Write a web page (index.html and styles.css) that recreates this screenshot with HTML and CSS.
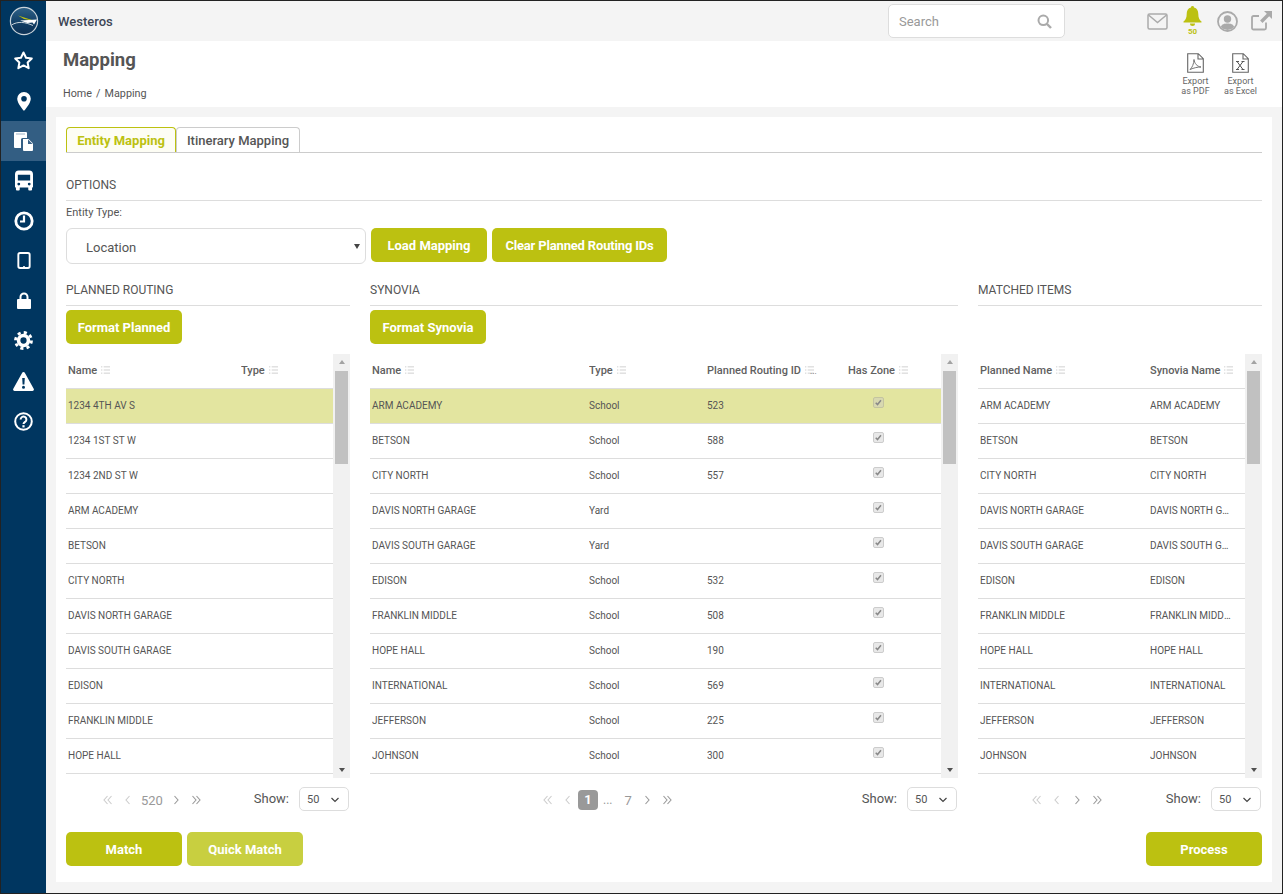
FILE: index.html
```html
<!DOCTYPE html>
<html lang="en">
<head>
<meta charset="utf-8">
<title>Mapping</title>
<link rel="stylesheet" href="styles.css">
</head>
<body>
<svg class="defs" width="0" height="0" aria-hidden="true">
  <symbol id="sort" viewBox="0 0 10 8"><path d="M0 .5h1.500M3 .5h7M0 4h1.500M3 4h7M0 7.500h1.500M3 7.500h7" fill="none" stroke="currentColor" stroke-width="1"/></symbol>
  <symbol id="chk" viewBox="0 0 12 12"><path d="M2.300 6.200l2.400 2.500 4.600-5.600" fill="none" stroke="currentColor" stroke-width="2"/></symbol>
  <symbol id="chl" viewBox="0 0 8 10"><path d="M5.500 1L2 5l3.500 4" fill="none" stroke="currentColor" stroke-width="1.100"/></symbol>
  <symbol id="chr" viewBox="0 0 8 10"><path d="M2.500 1L6 5 2.500 9" fill="none" stroke="currentColor" stroke-width="1.100"/></symbol>
  <symbol id="dbl" viewBox="0 0 10 10"><path d="M4.500 1L1 5l3.500 4M8.500 1L5 5l3.500 4" fill="none" stroke="currentColor" stroke-width="1.100"/></symbol>
  <symbol id="dbr" viewBox="0 0 10 10"><path d="M1.500 1L5 5 1.500 9M5.500 1L9 5 5.500 9" fill="none" stroke="currentColor" stroke-width="1.100"/></symbol>
  <symbol id="down" viewBox="0 0 10 6"><path d="M1.500 1L5 4.500 8.500 1" fill="none" stroke="currentColor" stroke-width="1.200"/></symbol>
</svg>
<div class="app">
  <nav class="side">
    <div class="nav-item logo">
      <svg width="30" height="30" viewBox="0 0 30 30"><defs><linearGradient id="lg" x1="0" y1="0" x2="0" y2="1"><stop offset="0" stop-color="#2f6288"/><stop offset=".55" stop-color="#123f66"/><stop offset="1" stop-color="#0c3054"/></linearGradient></defs><circle cx="15" cy="15" r="13.600" fill="url(#lg)" stroke="#c9d3da" stroke-width="1.200"/><path d="M2.500 19C9 15 16 16 24 19.500" fill="none" stroke="#c9d3da" stroke-width="1"/><path d="M9 9.500L26 15 15 13z" fill="#bcc111"/><path d="M11 14.500l17-1-3 5-1.500-2-5 .5z" fill="#fff"/></svg>
    </div>
    <a class="nav-item"><svg class="up1" width="21" height="21" viewBox="0 0 24 24"><path d="M12 2.800l2.900 6 6.600.9-4.800 4.600 1.200 6.500-5.900-3.200-5.900 3.200 1.200-6.500-4.800-4.600 6.600-.9z" fill="none" stroke="#fff" stroke-width="2.300" stroke-linejoin="round"/></svg></a>
    <a class="nav-item"><svg width="14" height="19" viewBox="0 0 14 19"><path fill="#fff" fill-rule="evenodd" d="M7 0a6.800 6.800 0 0 0-6.800 6.800C.2 11.500 7 19 7 19s6.800-7.500 6.800-12.200A6.800 6.800 0 0 0 7 0zm0 9.600a2.800 2.800 0 1 1 0-5.600 2.800 2.800 0 0 1 0 5.600z"/></svg></a>
    <a class="nav-item active"><svg width="21" height="21" viewBox="0 0 21 21"><path fill="#fff" d="M1 2a1 1 0 0 1 1-1h11a1 1 0 0 1 1 1v5H9.500A1.500 1.500 0 0 0 8 8.500V17H2a1 1 0 0 1-1-1z"/><path fill="#fff" d="M10 8h5.500l4.500 4.500V19a1 1 0 0 1-1 1h-8a1 1 0 0 1-1-1z"/><path fill="#3a6288" d="M15 8.500v4.500h4.500z"/><path stroke="#9fb3c6" d="M3 3h9" fill="none"/></svg></a>
    <a class="nav-item"><svg class="up1" width="18" height="21" viewBox="0 0 19 21"><path fill="#fff" fill-rule="evenodd" d="M4 0h11a4 4 0 0 1 4 4v13a1 1 0 0 1-1 1v2a1 1 0 0 1-1 1h-2a1 1 0 0 1-1-1v-2H5v2a1 1 0 0 1-1 1H2a1 1 0 0 1-1-1v-2a1 1 0 0 1-1-1V4a4 4 0 0 1 4-4zM3 4.500V10.500h13V4.500zM4 12.800a1.500 1.500 0 1 0 0 3 1.500 1.500 0 0 0 0-3zm11 0a1.500 1.500 0 1 0 0 3 1.500 1.500 0 0 0 0-3z"/></svg></a>
    <a class="nav-item"><svg width="20" height="20" viewBox="0 0 20 20"><circle cx="10" cy="10" r="8.200" fill="none" stroke="#fff" stroke-width="2.800"/><path d="M10 4.500V10.500H6" fill="none" stroke="#fff" stroke-width="2.200"/></svg></a>
    <a class="nav-item"><svg class="up1" width="14" height="17" viewBox="0 0 14 18"><rect x="1" y="1" width="12" height="16" rx="1.800" fill="none" stroke="#fff" stroke-width="2"/><rect x="6" y="15" width="2" height="1" fill="#fff"/></svg></a>
    <a class="nav-item"><svg class="up1" width="14" height="17" viewBox="0 0 14 17"><path d="M3.500 8V5a3.500 3.500 0 0 1 7 0v3" fill="none" stroke="#fff" stroke-width="2"/><rect y="7" width="14" height="10" rx="1" fill="#fff"/></svg></a>
    <a class="nav-item"><svg class="up1" width="19" height="19" viewBox="0 0 20 20"><circle cx="10" cy="10" r="8.400" fill="none" stroke="#fff" stroke-width="3" stroke-dasharray="3.300 3.300"/><circle cx="10" cy="10" r="5.200" fill="none" stroke="#fff" stroke-width="3.800"/></svg></a>
    <a class="nav-item"><svg width="21" height="19" viewBox="0 0 21 19"><path fill="#fff" fill-rule="evenodd" d="M10.500 0a1.500 1.500 0 0 1 1.300.8l8.900 16a1.500 1.500 0 0 1-1.300 2.200H1.600a1.500 1.500 0 0 1-1.300-2.200l8.900-16A1.500 1.500 0 0 1 10.500 0zM9.200 6l.4 6.500h1.800l.4-6.500zm1.300 7.800a1.500 1.500 0 1 0 0 3 1.500 1.500 0 0 0 0-3z"/></svg></a>
    <a class="nav-item"><svg width="19" height="19" viewBox="0 0 19 19"><circle cx="9.500" cy="9.500" r="8.300" fill="none" stroke="#fff" stroke-width="2"/><path d="M6.600 7.500a2.900 2.900 0 1 1 4.500 2.400c-1 .7-1.600 1.100-1.600 2.200" fill="none" stroke="#fff" stroke-width="2"/><rect x="8.400" y="13.200" width="2.200" height="2.200" fill="#fff"/></svg></a>
  </nav>
  <div class="main">
    <header class="topbar">
      <span class="org">Westeros</span>
      <div class="search">
        <span>Search</span>
        <svg width="15" height="15" viewBox="0 0 15 15"><circle cx="6.300" cy="6.300" r="4.800" fill="none" stroke="#aaa" stroke-width="2"/><path d="M10 10l4 4" stroke="#aaa" stroke-width="2.400"/></svg>
      </div>
      <div class="top-icons">
        <svg width="21" height="17" viewBox="0 0 21 17"><rect x="1" y="1" width="19" height="15" rx="1.500" fill="none" stroke="#aaa" stroke-width="1.500"/><path d="M1.500 2l9 7.500 9-7.500" fill="none" stroke="#aaa" stroke-width="1.500"/></svg>
        <div class="bell">
          <svg width="19" height="20" viewBox="0 0 19 20"><path fill="#bcc111" d="M9.500 0a1.500 1.500 0 0 1 1.500 1.600c3 .7 4.300 3.200 4.300 6.400 0 4 1 5.700 3.200 7.500v1H.5v-1C2.700 13.700 3.700 12 3.700 8c0-3.200 1.300-5.700 4.300-6.400A1.500 1.500 0 0 1 9.500 0z"/><path fill="#bcc111" d="M7 17.500h5a2.500 2.500 0 0 1-5 0z"/></svg>
          <span>50</span>
        </div>
        <svg width="21" height="21" viewBox="0 0 21 21"><circle cx="10.500" cy="10.500" r="9.500" fill="none" stroke="#aaa" stroke-width="1.800"/><circle cx="10.500" cy="8" r="3.700" fill="#aaa"/><path fill="#aaa" d="M3.800 16c1-3 3.500-3.500 6.700-3.500s5.700.5 6.700 3.500a9 9 0 0 1-13.400 0z"/></svg>
        <svg width="21" height="20" viewBox="0 0 21 20"><path d="M15 11.500V17a1.500 1.500 0 0 1-1.500 1.500H2.500A1.500 1.500 0 0 1 1 17V6.500A1.500 1.500 0 0 1 2.500 5H8" fill="none" stroke="#aaa" stroke-width="1.800"/><path fill="#aaa" d="M13 0h8v8l-2.800-2.800-6.700 6.700-2.400-2.400 6.700-6.700z"/></svg>
      </div>
    </header>
    <section class="page-head">
      <div>
        <h1>Mapping</h1>
        <div class="crumbs"><span>Home</span><span>/</span><span>Mapping</span></div>
      </div>
      <div class="exports">
        <div class="export">
          <svg width="17" height="20" viewBox="0 0 17 20"><path d="M.7.700h10.600l5 5V19.300H.7zM11 .7v5.300h5.300" fill="none" stroke="#666" stroke-width="1.100"/><path d="M3 16.500c2-1.500 4-6 4-10 .5 4 3 7 7 7.500-3.500 0-7 .8-11 2.500z" fill="none" stroke="#666" stroke-width=".9"/></svg>
          <span>Export<br>as PDF</span>
        </div>
        <div class="export">
          <svg width="17" height="20" viewBox="0 0 17 20"><path d="M.7.700h10.600l5 5V19.300H.7zM11 .7v5.300h5.300" fill="none" stroke="#666" stroke-width="1.100"/><path d="M5 8.500l6 8M11 8.500l-6 8M4 8.500h3M9.500 8.500h3M4 16.500h3M9.500 16.500h3" fill="none" stroke="#555" stroke-width="1"/></svg>
          <span>Export<br>as Excel</span>
        </div>
      </div>
    </section>
    <main class="content">
      <div class="card">
        <div class="tabs">
          <div class="tab on">Entity Mapping</div>
          <div class="tab">Itinerary Mapping</div>
        </div>
        <h2 class="sec sec-opt">OPTIONS</h2>
        <div class="entity-label">Entity Type:</div>
        <div class="opt-row">
          <div class="select-lg">Location<i class="caret"></i></div>
          <button class="btn w116">Load Mapping</button>
          <button class="btn clear">Clear Planned Routing IDs</button>
        </div>
        <div class="cols">
          <section class="col">
            <h2 class="sec">PLANNED ROUTING</h2>
            <div class="tools"><button class="btn w116">Format Planned</button></div>
            <div class="grid-wrap">
              <div class="list planned">
                <div class="row head"><div>Name<svg class="sort"><use href="#sort"/></svg></div><div>Type<svg class="sort"><use href="#sort"/></svg></div></div>
                <div class="row sel"><div>1234 4TH AV S</div><div></div></div>
                <div class="row"><div>1234 1ST ST W</div><div></div></div>
                <div class="row"><div>1234 2ND ST W</div><div></div></div>
                <div class="row"><div>ARM ACADEMY</div><div></div></div>
                <div class="row"><div>BETSON</div><div></div></div>
                <div class="row"><div>CITY NORTH</div><div></div></div>
                <div class="row"><div>DAVIS NORTH GARAGE</div><div></div></div>
                <div class="row"><div>DAVIS SOUTH GARAGE</div><div></div></div>
                <div class="row"><div>EDISON</div><div></div></div>
                <div class="row"><div>FRANKLIN MIDDLE</div><div></div></div>
                <div class="row"><div>HOPE HALL</div><div></div></div>
              </div>
              <div class="sb"><i class="up"></i><b></b><i class="dn"></i></div>
            </div>
            <div class="pager-row">
              <div class="pager p1">
                <svg class="pg off"><use href="#dbl"/></svg><svg class="pg off"><use href="#chl"/></svg>
                <span class="num">520</span>
                <svg class="pg"><use href="#chr"/></svg><svg class="pg"><use href="#dbr"/></svg>
              </div>
              <div class="show"><span>Show:</span><div class="select-sm">50<svg class="dd"><use href="#down"/></svg></div></div>
            </div>
          </section>
          <section class="col">
            <h2 class="sec">SYNOVIA</h2>
            <div class="tools"><button class="btn w116">Format Synovia</button></div>
            <div class="grid-wrap">
              <div class="list synovia">
                <div class="row head"><div>Name<svg class="sort"><use href="#sort"/></svg></div><div>Type<svg class="sort"><use href="#sort"/></svg></div><div>Planned Routing ID<svg class="sort"><use href="#sort"/></svg><span class="dots">...</span></div><div>Has Zone<svg class="sort"><use href="#sort"/></svg></div></div>
                <div class="row sel"><div>ARM ACADEMY</div><div>School</div><div>523</div><div class="zone"><svg class="chk"><use href="#chk"/></svg></div></div>
                <div class="row"><div>BETSON</div><div>School</div><div>588</div><div class="zone"><svg class="chk"><use href="#chk"/></svg></div></div>
                <div class="row"><div>CITY NORTH</div><div>School</div><div>557</div><div class="zone"><svg class="chk"><use href="#chk"/></svg></div></div>
                <div class="row"><div>DAVIS NORTH GARAGE</div><div>Yard</div><div></div><div class="zone"><svg class="chk"><use href="#chk"/></svg></div></div>
                <div class="row"><div>DAVIS SOUTH GARAGE</div><div>Yard</div><div></div><div class="zone"><svg class="chk"><use href="#chk"/></svg></div></div>
                <div class="row"><div>EDISON</div><div>School</div><div>532</div><div class="zone"><svg class="chk"><use href="#chk"/></svg></div></div>
                <div class="row"><div>FRANKLIN MIDDLE</div><div>School</div><div>508</div><div class="zone"><svg class="chk"><use href="#chk"/></svg></div></div>
                <div class="row"><div>HOPE HALL</div><div>School</div><div>190</div><div class="zone"><svg class="chk"><use href="#chk"/></svg></div></div>
                <div class="row"><div>INTERNATIONAL</div><div>School</div><div>569</div><div class="zone"><svg class="chk"><use href="#chk"/></svg></div></div>
                <div class="row"><div>JEFFERSON</div><div>School</div><div>225</div><div class="zone"><svg class="chk"><use href="#chk"/></svg></div></div>
                <div class="row"><div>JOHNSON</div><div>School</div><div>300</div><div class="zone"><svg class="chk"><use href="#chk"/></svg></div></div>
              </div>
              <div class="sb"><i class="up"></i><b></b><i class="dn"></i></div>
            </div>
            <div class="pager-row">
              <div class="pager p2">
                <svg class="pg off"><use href="#dbl"/></svg><svg class="pg off"><use href="#chl"/></svg>
                <span class="cur">1</span><span class="ell">...</span><span class="num">7</span>
                <svg class="pg"><use href="#chr"/></svg><svg class="pg"><use href="#dbr"/></svg>
              </div>
              <div class="show"><span>Show:</span><div class="select-sm">50<svg class="dd"><use href="#down"/></svg></div></div>
            </div>
          </section>
          <section class="col">
            <h2 class="sec">MATCHED ITEMS</h2>
            <div class="tools"></div>
            <div class="grid-wrap">
              <div class="list matched">
                <div class="row head"><div>Planned Name<svg class="sort"><use href="#sort"/></svg></div><div>Synovia Name<svg class="sort"><use href="#sort"/></svg></div></div>
                <div class="row"><div>ARM ACADEMY</div><div>ARM ACADEMY</div></div>
                <div class="row"><div>BETSON</div><div>BETSON</div></div>
                <div class="row"><div>CITY NORTH</div><div>CITY NORTH</div></div>
                <div class="row"><div>DAVIS NORTH GARAGE</div><div>DAVIS NORTH GARAGE</div></div>
                <div class="row"><div>DAVIS SOUTH GARAGE</div><div>DAVIS SOUTH GARAGE</div></div>
                <div class="row"><div>EDISON</div><div>EDISON</div></div>
                <div class="row"><div>FRANKLIN MIDDLE</div><div>FRANKLIN MIDDLE</div></div>
                <div class="row"><div>HOPE HALL</div><div>HOPE HALL</div></div>
                <div class="row"><div>INTERNATIONAL</div><div>INTERNATIONAL</div></div>
                <div class="row"><div>JEFFERSON</div><div>JEFFERSON</div></div>
                <div class="row"><div>JOHNSON</div><div>JOHNSON</div></div>
              </div>
              <div class="sb"><i class="up"></i><b></b><i class="dn"></i></div>
            </div>
            <div class="pager-row">
              <div class="pager p3">
                <svg class="pg off"><use href="#dbl"/></svg><svg class="pg off"><use href="#chl"/></svg>
                <svg class="pg"><use href="#chr"/></svg><svg class="pg"><use href="#dbr"/></svg>
              </div>
              <div class="show"><span>Show:</span><div class="select-sm">50<svg class="dd"><use href="#down"/></svg></div></div>
            </div>
          </section>
        </div>
        <div class="actions">
          <div class="act-left">
            <button class="btn w116">Match</button>
            <button class="btn w116 light">Quick Match</button>
          </div>
          <button class="btn w116">Process</button>
        </div>
      </div>
    </main>
  </div>
</div>
</body>
</html>
```
FILE: styles.css
```css
* { box-sizing: border-box; }
html, body { margin: 0; padding: 0; }
body { font-family: Roboto, "Liberation Sans", sans-serif; color: #555; background: #fff; }
.defs { position: absolute; }
.app { display: flex; width: 1283px; height: 894px; border: 1px solid #222; overflow: hidden; }

/* sidebar */
.side { width: 45px; flex: none; background: #003660; display: flex; flex-direction: column; }
.nav-item { height: 40px; display: flex; align-items: center; justify-content: center; flex: none; }
.nav-item.active { background: #335e83; }
.up1 { margin-top: -2px; }

/* main column */
.main { flex: 1; min-width: 0; display: flex; flex-direction: column; background: #f4f4f4; }
.topbar { height: 40px; flex: none; display: flex; align-items: center; padding: 0 10px 0 12px; background: #f4f4f4; }
.org { font-size: 13px; font-weight: 500; color: #3d4656; }
.search { margin-left: auto; width: 177px; height: 34px; background: #fff; border: 1px solid #ddd; border-radius: 5px; display: flex; align-items: center; justify-content: space-between; padding: 0 12px 0 10px; font-size: 13px; color: #999; }
.top-icons { display: flex; align-items: center; margin-left: 82px; gap: 13px; height: 40px; }
.bell { width: 21px; height: 40px; display: flex; flex-direction: column; align-items: center; padding-top: 5px; margin: 0 1px; }
.bell span { font-size: 8px; font-weight: 700; line-height: 9px; margin-top: 1px; color: #bcc111; }

.page-head { height: 66px; flex: none; background: #fff; display: flex; justify-content: space-between; padding: 7px 25px 0 17px; }
h1 { margin: 0; font-size: 18.5px; line-height: 24px; font-weight: 700; color: #555; }
.crumbs { display: flex; gap: 4px; font-size: 10.8px; line-height: 14px; margin-top: 15px; color: #555; }
.exports { display: flex; gap: 12px; padding-top: 5px; }
.export { width: 33px; display: flex; flex-direction: column; align-items: center; font-size: 9px; line-height: 10px; text-align: center; color: #666; }
.export svg { margin-bottom: 3px; }
.export span { white-space: nowrap; }

/* card */
.content { flex: 1; padding: 10px 10px 11px; min-height: 0; }
.card { background: #fff; height: 100%; padding: 10px 10px 0; display: flex; flex-direction: column; }
.tabs { display: flex; height: 26px; border-bottom: 1px solid #ccc; flex: none; }
.tab { height: 25px; width: 124px; border: 1px solid #ccc; border-bottom: 0; border-radius: 4px 4px 0 0; font-size: 13px; font-weight: 500; line-height: 25px; text-align: center; color: #555; }
.tab.on { width: 110px; border-color: #bcc111; background: #fdfdf4; color: #bcc111; font-weight: 700; }

.sec { margin: 0; font-size: 12px; font-weight: 400; line-height: 16px; color: #555; height: 26px; padding-top: 2px; border-bottom: 1px solid #ddd; flex: none; }
.sec-opt { margin-top: 22px; }
.entity-label { font-size: 11px; line-height: 12px; margin-top: 6px; color: #555; }
.opt-row { display: flex; align-items: flex-start; gap: 5px; margin-top: 9px; }
.select-lg { width: 300px; height: 36px; border: 1px solid #ddd; border-radius: 6px; padding-left: 19px; font-size: 13px; line-height: 37px; color: #555; position: relative; }
.caret { position: absolute; right: 5px; top: 15px; border: 3.5px solid transparent; border-top: 5px solid #444; border-bottom: 0; }
.btn { height: 34px; border: 0; border-radius: 5px; background: #bcc111; color: #fff; font: 700 13px/16px Roboto, sans-serif; padding: 2px 13px 0; white-space: nowrap; }
.btn.w116 { width: 116px; padding: 2px 0 0; }
.btn.clear { width: 175px; padding: 2px 0 0; letter-spacing: -.17px; }
.btn.light { background: #c8cf40; }

.cols { display: grid; grid-template-columns: 284px 588px 284px; gap: 20px; margin-top: 16px; }
.col { min-width: 0; }
.tools { height: 34px; margin: 4px 0 10px; }

.grid-wrap { display: flex; height: 424px; }
.list { flex: 1; min-width: 0; overflow: hidden; }
.row { display: grid; height: 35px; align-items: center; font-size: 10px; color: #555; border-bottom: 1px solid #ddd; padding: 0 0 2px 2px; }
.row > div { min-width: 0; white-space: nowrap; overflow: hidden; text-overflow: ellipsis; }
.row.head { font-size: 11px; font-weight: 500; color: #606060; }
.row.sel { background: #e3e5a0; }
.planned .row { grid-template-columns: 173px 1fr; }
.synovia .row { grid-template-columns: 217px 118px 141px 1fr; }
.matched .row { grid-template-columns: 170px 84px; }
.sort { width: 9px; height: 8px; margin-left: 4px; color: #ccc; }
.dots { font-size: 8px; color: #777; line-height: 8px; margin-left: -4px; }
.zone { height: 32px; padding: 8px 0 0 25px; }
.chk { display: block; width: 11px; height: 11px; background: #e8e8e8; border: 1px solid #ccc; border-radius: 2px; color: #888; }
.sel .chk { background: #d8d8b0; border-color: #c4c4a0; }

.sb { width: 17px; flex: none; background: #f1f1f1; display: flex; flex-direction: column; align-items: center; }
.sb b { display: block; width: 13px; height: 93px; background: #c1c1c1; }
.sb .up, .sb .dn { display: block; width: 0; height: 0; border: 3.5px solid transparent; }
.sb .up { border-bottom: 4px solid #a3a3a3; border-top: 0; margin: 6px 0 7px; }
.sb .dn { border-top: 4px solid #505050; border-bottom: 0; margin-top: auto; margin-bottom: 6px; }

.pager-row { display: flex; align-items: center; justify-content: space-between; height: 24px; margin-top: 9px; }
.pager { display: flex; align-items: center; height: 20px; color: #999; font-size: 13px; margin-top: 2px; }
.pager.p1 { margin-left: 37px; gap: 10px; }
.pager.p2 { margin-left: 173px; gap: 6px; }
.pager.p3 { margin-left: 54px; gap: 10px; }
.pg { width: 10px; height: 10px; color: #999; }
.pg.off { color: #ccc; }
.pager.p2 .pg.off + .pg.off { margin-left: 4px; }
.pager.p2 .pg:last-child { margin-left: 4px; }
.num { color: #999; margin: 0 -2px; }
.p2 .num { margin: 0; padding: 0 4px 0 6px; }
.cur { width: 20px; height: 20px; line-height: 20px; border-radius: 4px; background: #999; color: #fff; font-weight: 700; text-align: center; margin-left: -1px; }
.ell { font-size: 12px; color: #999; margin-left: -1px; }
.show { display: flex; align-items: center; gap: 10px; font-size: 13px; color: #555; margin-right: 1px; }
.show > span { margin-top: -2px; }
.select-sm { width: 50px; height: 24px; border: 1px solid #ddd; border-radius: 5px; font-size: 11px; line-height: 23px; padding-left: 7px; position: relative; color: #555; }
.dd { position: absolute; right: 8px; top: 9px; width: 10px; height: 6px; color: #444; }

.actions { display: flex; justify-content: space-between; margin-top: 21px; }
.act-left { display: flex; gap: 5px; }
```
